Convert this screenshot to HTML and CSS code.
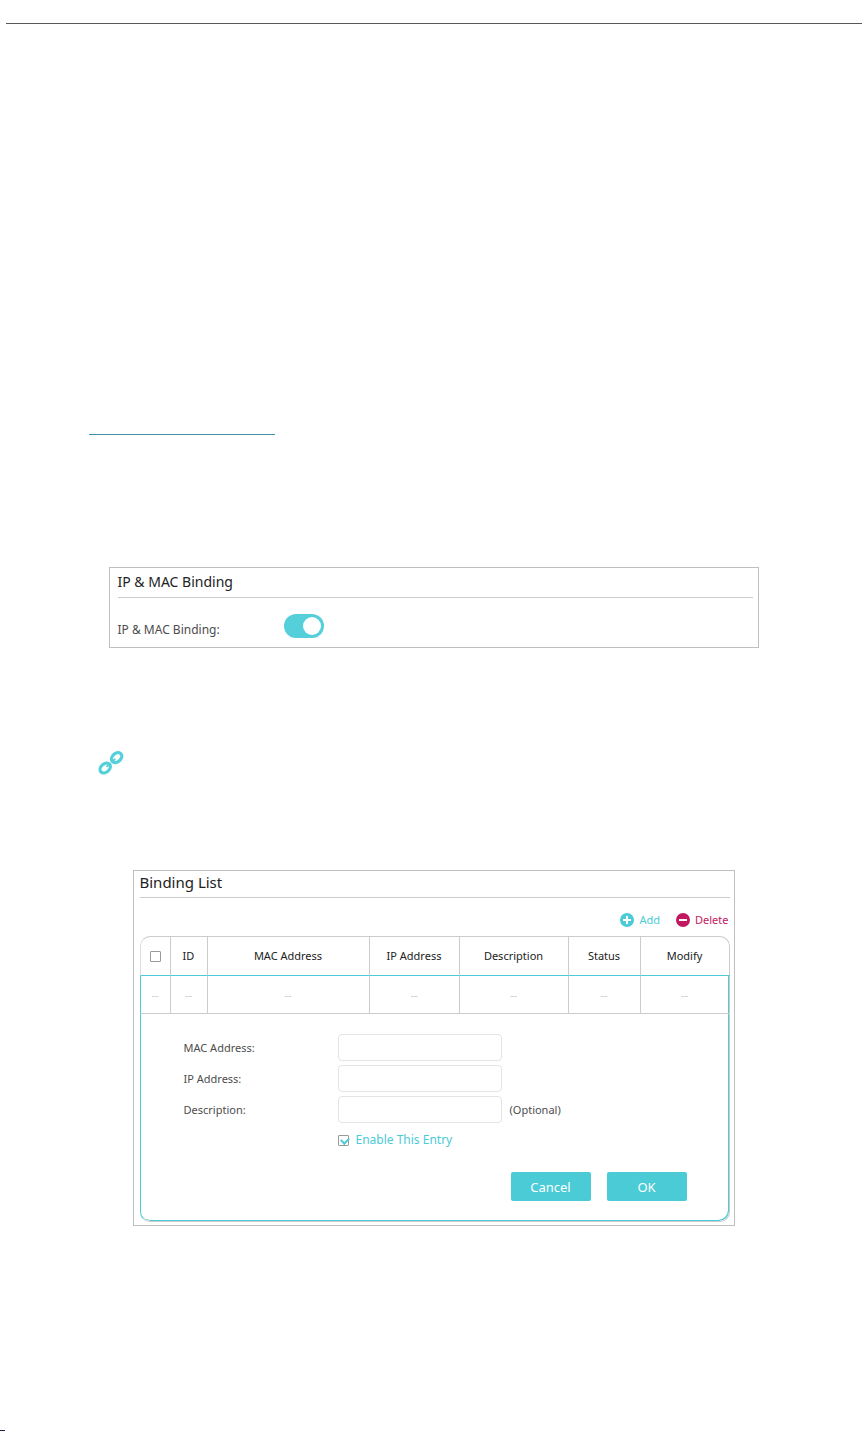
FILE: index.html
```html
<!DOCTYPE html>
<html lang="en">
<head>
  <meta charset="UTF-8" />
  <meta name="viewport" content="width=device-width, initial-scale=1" />
  <title>IP &amp; MAC Binding</title>
  <link rel="stylesheet" href="styles.css">
</head>
<body>
  <header class="page-header"></header>

  <main class="content">
    <div class="link-line"></div>

    <section class="panel binding-panel">
      <h2 class="panel-title">IP &amp; MAC Binding</h2>
      <div class="switch-row">
        <label for="binding">IP &amp; MAC Binding:</label>
        <input type="checkbox" id="binding" class="switch" checked />
      </div>
    </section>

    <div class="bind-icon">
      <svg width="28" height="28" viewBox="0 0 28 28" fill="none" stroke="#55cfda" stroke-width="3.2">
        <ellipse cx="8.2" cy="19" rx="5.8" ry="4.2" transform="rotate(-42 8.2 19)" />
        <ellipse cx="19.6" cy="8.6" rx="5.8" ry="4.2" transform="rotate(-42 19.6 8.6)" />
        <path d="M10.2 17.2L12.6 15M15.4 12.4L17.6 10.4" stroke-width="2" stroke-linecap="round" />
      </svg>
    </div>

    <section class="panel list-panel">
      <h2 class="panel-title">Binding List</h2>

      <div class="actions">
        <button type="button" class="action add">
          <svg width="14" height="14" viewBox="0 0 14 14">
            <circle cx="7" cy="7" r="7" fill="#4acbd6" />
            <path d="M7 3v8M3 7h8" stroke="#fff" stroke-width="2" />
          </svg>
          Add
        </button>
        <button type="button" class="action delete">
          <svg width="14" height="14" viewBox="0 0 14 14">
            <circle cx="7" cy="7" r="7" fill="#c2185f" />
            <path d="M3 7h8" stroke="#fff" stroke-width="2" />
          </svg>
          Delete
        </button>
      </div>

      <table class="list">
        <colgroup>
          <col class="col-check" />
          <col class="col-id" />
          <col class="col-mac" />
          <col class="col-ip" />
          <col class="col-desc" />
          <col class="col-status" />
          <col class="col-modify" />
        </colgroup>
        <thead>
          <tr>
            <th><input type="checkbox" class="check" aria-label="Select all" /></th>
            <th>ID</th>
            <th>MAC Address</th>
            <th>IP Address</th>
            <th>Description</th>
            <th>Status</th>
            <th>Modify</th>
          </tr>
        </thead>
        <tbody>
          <tr class="empty-row">
            <td>--</td>
            <td>--</td>
            <td>--</td>
            <td>--</td>
            <td>--</td>
            <td>--</td>
            <td>--</td>
          </tr>
          <tr>
            <td colspan="7" class="edit-cell">
              <form class="entry-form">
                <div class="field">
                  <label for="mac">MAC Address:</label>
                  <input type="text" id="mac" />
                </div>
                <div class="field">
                  <label for="ip">IP Address:</label>
                  <input type="text" id="ip" />
                </div>
                <div class="field">
                  <label for="desc">Description:</label>
                  <input type="text" id="desc" />
                  <span class="hint">(Optional)</span>
                </div>
                <div class="enable">
                  <input type="checkbox" id="enable" class="check" checked />
                  <label for="enable">Enable This Entry</label>
                </div>
                <div class="buttons">
                  <button type="button">Cancel</button>
                  <button type="button">OK</button>
                </div>
              </form>
            </td>
          </tr>
        </tbody>
      </table>
    </section>
  </main>

  <footer class="page-footer"></footer>
</body>
</html>
```
FILE: styles.css
```css
* {
  box-sizing: border-box;
}

body {
  margin: 0;
  min-height: 100vh;
  display: flex;
  flex-direction: column;
  background: #fff;
  color: #4d4d4d;
  font-family: "Noto Sans", sans-serif;
  font-size: 12px;
  line-height: 16px;
}

button,
input {
  font: inherit;
}

.page-header {
  margin: 23px 5px 0 6px;
  border-top: 1px solid #58585a;
}

.content {
  width: 100%;
  max-width: 690px;
  margin: 0 auto;
  padding: 410px 20px 0;
}

.link-line {
  width: 186px;
  margin-left: -20px;
  border-top: 1px solid #4092a6;
}

/* Panels */
.panel {
  border: 1px solid #bfbfbf;
}

.panel-title {
  margin: 0;
  border-bottom: 1px solid #ccc;
  color: #222;
  font-size: 14px;
  font-weight: 400;
  line-height: 20px;
}

.binding-panel {
  margin-top: 132px;
  padding: 4px 5px 9px 8px;
}

.binding-panel .panel-title {
  padding-bottom: 5px;
}

.switch-row {
  display: flex;
  align-items: flex-end;
  padding-top: 16px;
}

.switch-row label {
  width: 166px;
}

.switch {
  appearance: none;
  display: flex;
  justify-content: flex-end;
  width: 40px;
  height: 24px;
  margin: 0;
  padding: 3px;
  border-radius: 12px;
  background: #55cfda;
}

.switch::before {
  content: "";
  width: 18px;
  height: 18px;
  border-radius: 50%;
  background: #fff;
}

.switch:not(:checked) {
  justify-content: flex-start;
  background: #ccc;
}

.bind-icon {
  height: 28px;
  margin: 101px 0 93px -12px;
}

.bind-icon svg {
  display: block;
}

/* Binding list */
.list-panel {
  margin: 0 24px;
  padding: 1px 4px 3px 6px;
}

.list-panel .panel-title {
  padding-bottom: 5px;
  font-size: 15px;
}

.actions {
  display: flex;
  justify-content: flex-end;
  gap: 16px;
  padding: 14px 1px 8px 0;
  font-size: 11px;
}

.action {
  display: flex;
  align-items: center;
  gap: 5px;
  padding: 0;
  border: 0;
  background: none;
  cursor: pointer;
}

.add {
  color: #4acbd6;
}

.delete {
  color: #c2185f;
}

.list {
  width: 100%;
  table-layout: fixed;
  border-collapse: separate;
  border-spacing: 0;
  font-size: 11px;
  text-align: center;
}

.col-check { width: 31px; }
.col-id { width: 37px; }
.col-mac { width: 162px; }
.col-ip { width: 90px; }
.col-desc { width: 109px; }
.col-status { width: 72px; }
.col-modify { width: 89px; }

.list th,
.list td {
  padding: 0;
  border-right: 1px solid #ccc;
}

.list th {
  height: 40px;
  border-top: 1px solid #ccc;
  border-bottom: 1px solid #4acbd6;
  color: #222;
  font-weight: 400;
}

.list th:first-child {
  border-left: 1px solid #ddd;
  border-top-left-radius: 10px;
}

.list th:last-child {
  border-top-right-radius: 10px;
}

.list .empty-row td {
  height: 38px;
  border-bottom: 1px solid #ccc;
  color: #ccc;
}

.list td:first-child {
  border-left: 1px solid #4acbd6;
}

.list td:last-child {
  box-shadow: inset -1px 0 #4acbd6;
}

.list td.edit-cell {
  border-bottom: 1px solid #ccc;
  border-radius: 0 0 10px 10px;
  box-shadow: inset -1px -1px #4acbd6;
  text-align: left;
}

.check {
  appearance: none;
  display: block;
  width: 11px;
  height: 11px;
  margin: 0;
  border: 1px solid #999;
  border-radius: 1px;
}

th .check {
  margin: 0 auto;
}

.check:checked::before {
  content: "";
  display: block;
  width: 6px;
  height: 4px;
  margin: 1px 0 0 2px;
  border: solid #4acbd6;
  border-width: 0 0 2px 2px;
  transform: rotate(-45deg);
}

/* Entry form */
.entry-form {
  padding: 20px 42px 20px 43px;
}

.field {
  display: flex;
  align-items: center;
  margin-bottom: 4px;
}

.field label {
  width: 154px;
}

.field input {
  width: 164px;
  height: 27px;
  padding: 0 8px;
  border: 1px solid #e4e4e4;
  border-radius: 4px;
}

.hint {
  margin-left: 8px;
}

.enable {
  display: flex;
  align-items: center;
  gap: 7px;
  margin: 9px 0 24px 154px;
  color: #4acbd6;
  font-size: 12px;
}

.buttons {
  display: flex;
  justify-content: flex-end;
  gap: 16px;
}

.buttons button {
  width: 80px;
  height: 29px;
  padding: 0;
  border: 0;
  border-radius: 2px;
  background: #4acbd6;
  color: #fff;
  font-size: 13px;
  cursor: pointer;
}

.page-footer {
  width: 5px;
  margin-top: auto;
  border-top: 1px solid #231f40;
}
```
